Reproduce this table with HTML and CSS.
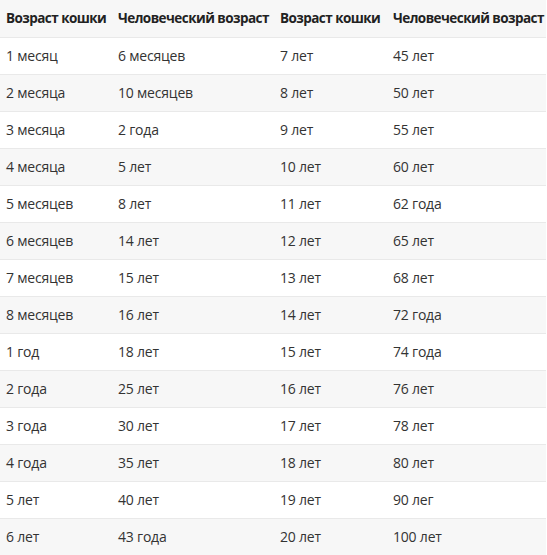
FILE: index.html
```html
<!DOCTYPE html>
<html lang="ru">
<head>
<meta charset="utf-8">
<link rel="stylesheet" href="styles.css">
</head>
<body>
<table class="age-table">
  <thead>
    <tr><th>Возраст кошки</th><th>Человеческий возраст</th><th>Возраст кошки</th><th>Человеческий возраст</th></tr>
  </thead>
  <tbody>
    <tr><td>1 месяц</td><td>6 месяцев</td><td>7 лет</td><td>45 лет</td></tr>
    <tr><td>2 месяца</td><td>10 месяцев</td><td>8 лет</td><td>50 лет</td></tr>
    <tr><td>3 месяца</td><td>2 года</td><td>9 лет</td><td>55 лет</td></tr>
    <tr><td>4 месяца</td><td>5 лет</td><td>10 лет</td><td>60 лет</td></tr>
    <tr><td>5 месяцев</td><td>8 лет</td><td>11 лет</td><td>62 года</td></tr>
    <tr><td>6 месяцев</td><td>14 лет</td><td>12 лет</td><td>65 лет</td></tr>
    <tr><td>7 месяцев</td><td>15 лет</td><td>13 лет</td><td>68 лет</td></tr>
    <tr><td>8 месяцев</td><td>16 лет</td><td>14 лет</td><td>72 года</td></tr>
    <tr><td>1 год</td><td>18 лет</td><td>15 лет</td><td>74 года</td></tr>
    <tr><td>2 года</td><td>25 лет</td><td>16 лет</td><td>76 лет</td></tr>
    <tr><td>3 года</td><td>30 лет</td><td>17 лет</td><td>78 лет</td></tr>
    <tr><td>4 года</td><td>35 лет</td><td>18 лет</td><td>80 лет</td></tr>
    <tr><td>5 лет</td><td>40 лет</td><td>19 лет</td><td>90 лег</td></tr>
    <tr><td>6 лет</td><td>43 года</td><td>20 лет</td><td>100 лет</td></tr>
  </tbody>
</table>
</body>
</html>
```

FILE: styles.css
```css
html, body {
  margin: 0;
  padding: 0;
  background: #ffffff;
}
.age-table {
  width: 546px;
  border-collapse: collapse;
  table-layout: fixed;
  font-family: "Open Sans", "Noto Sans", sans-serif;
  font-size: 14px;
  letter-spacing: -0.2px;
  color: #333333;
}
.age-table th,
.age-table td {
  height: 37px;
  padding: 0 0 0 6px;
  text-align: left;
  vertical-align: middle;
  border-bottom: 1px solid #e9e9e9;
  white-space: nowrap;
  box-sizing: border-box;
  overflow: visible;
}
.age-table th:nth-child(1), .age-table td:nth-child(1) { width: 112px; }
.age-table th:nth-child(2), .age-table td:nth-child(2) { width: 162px; }
.age-table th:nth-child(3), .age-table td:nth-child(3) { width: 113px; }
.age-table th:nth-child(4), .age-table td:nth-child(4) { width: 159px; }
.age-table th {
  font-weight: 700;
  font-size: 13.5px;
  letter-spacing: -0.55px;
  color: #222222;
  background: #f7f7f7;
}
.age-table tbody tr:nth-child(even) td {
  background: #f7f7f7;
}
.age-table tbody tr:last-child td {
  border-bottom: none;
}
```
